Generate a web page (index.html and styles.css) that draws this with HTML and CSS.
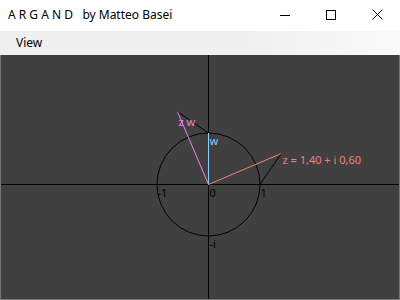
FILE: index.html
```html
<!DOCTYPE html>
<html lang="en">
<head>
  <meta charset="UTF-8">
  <title>ARGAND</title>
  <link rel="stylesheet" href="styles.css">
</head>
<body>
  <div class="window">
    <div class="title-bar">
      <span class="title">A R G A N D&nbsp;&nbsp; by Matteo Basei</span>
      <div class="controls">
        <button class="ctl" aria-label="Minimize">
          <svg width="10" height="10" viewBox="0 0 10 10"><path d="M0 5.5h10" stroke="#000" stroke-width="1"/></svg>
        </button>
        <button class="ctl" aria-label="Maximize">
          <svg width="10" height="10" viewBox="0 0 10 10"><rect x="0.5" y="0.5" width="9" height="9" fill="none" stroke="#000" stroke-width="1"/></svg>
        </button>
        <button class="ctl" aria-label="Close">
          <svg width="11" height="11" viewBox="0 0 11 11"><path d="M0.5 0.5l10 10M10.5 0.5l-10 10" stroke="#000" stroke-width="1"/></svg>
        </button>
      </div>
    </div>
    <div class="menu-bar">
      <span class="menu-item">View</span>
    </div>
    <div class="canvas">
      <svg class="plane" width="398" height="244" viewBox="0 0 398 244">
        <g transform="translate(207.5,129.5)">
          <!-- axes -->
          <line x1="-208" y1="0" x2="192" y2="0" stroke="#000"/>
          <line x1="0" y1="-130" x2="0" y2="116" stroke="#000"/>
          <!-- unit circle -->
          <circle cx="0" cy="0" r="51.5" fill="none" stroke="#000"/>
          <!-- similar triangles -->
          <line x1="51.5" y1="0" x2="72.8" y2="-31" stroke="#000"/>
          <line x1="0" y1="-51.5" x2="-31" y2="-72.8" stroke="#000"/>
          <!-- vectors -->
          <line x1="0" y1="0" x2="72.8" y2="-31" stroke="#f08080"/>
          <line x1="0" y1="0" x2="0" y2="-51.5" stroke="#87cefa"/>
          <line x1="0" y1="0" x2="-31" y2="-72.8" stroke="#ee82ee"/>
          <!-- labels -->
          <g class="labels">
            <text x="1" y="12">0</text>
            <text x="52" y="12">1</text>
            <text x="-51" y="12">-1</text>
            <text x="1" y="63">-i</text>
            <text class="lbl-w" x="1" y="-40">w</text>
            <text class="lbl-zw" x="-30" y="-59">z w</text>
            <text class="lbl-z" x="74" y="-21">z = 1,40 + i 0,60</text>
          </g>
        </g>
      </svg>
    </div>
  </div>
</body>
</html>
```

FILE: styles.css
```css
* {
  margin: 0;
  padding: 0;
  box-sizing: border-box;
}

body {
  width: 400px;
  height: 300px;
  overflow: hidden;
  font-family: "Noto Sans", "Open Sans", sans-serif;
  font-size: 12px;
  color: #000;
}

.window {
  display: flex;
  flex-direction: column;
  height: 300px;
  background: #fff;
}

.title-bar {
  display: flex;
  align-items: center;
  justify-content: space-between;
  height: 31px;
  background: #fff;
}

.title {
  padding-left: 8px;
  padding-bottom: 2px;
  font-size: 12px;
  white-space: pre;
}

.controls {
  display: flex;
  height: 100%;
}

.ctl {
  width: 46px;
  height: 100%;
  border: none;
  background: transparent;
  display: flex;
  align-items: center;
  justify-content: center;
  padding-bottom: 2px;
}

.menu-bar {
  display: flex;
  align-items: center;
  height: 24px;
  background: linear-gradient(90deg, #f0f0f0 0%, #f0f0f0 62%, #fafafa 100%);
  padding-left: 16px;
}

.menu-item {
  font-size: 12px;
  padding-bottom: 1px;
}

.canvas {
  flex: 1;
  background: #404040;
  border: 1px solid #767676;
  border-top: none;
  overflow: hidden;
}

.plane {
  display: block;
}

.labels text {
  font-family: "Noto Sans", "Open Sans", sans-serif;
  font-size: 11px;
  fill: #000;
}

.labels .lbl-w {
  fill: #87cefa;
}

.labels .lbl-zw {
  fill: #ee82ee;
}

.labels .lbl-z {
  fill: #f08080;
}
```
